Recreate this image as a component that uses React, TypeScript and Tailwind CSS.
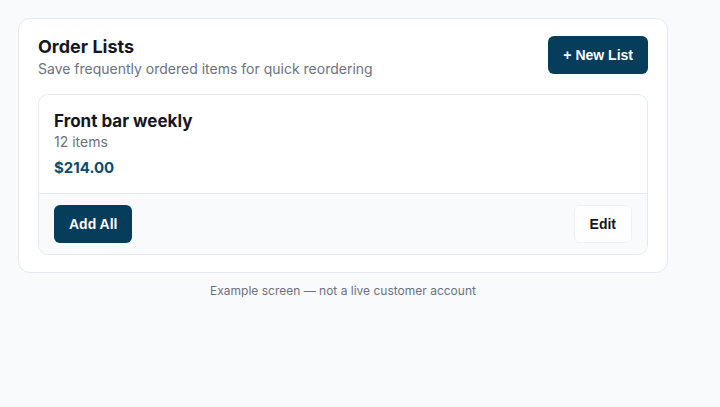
export default function App() {
  return (
    <div className="min-h-screen bg-[#f8fafc] px-[18px] pt-[18px] font-['Inter',sans-serif]">
      <div className="w-[650px]">
        <section className="rounded-[12px] border border-[#e5e9ef] bg-white px-[19px] pb-[17px] pt-[14px]">
          <div className="flex items-start justify-between">
            <div>
              <h1 className="text-[18px] font-bold leading-[28px] text-[#16161f]">Order Lists</h1>
              <p className="mt-[-2px] text-[14px] leading-[20px] text-[#6b7280]">Save frequently ordered items for quick reordering</p>
            </div>
            <button
              type="button"
              className="mt-[3px] h-[38px] rounded-[6px] bg-[#053d5a] px-[15px] font-['Liberation_Sans',Arial,sans-serif] text-[14px] font-bold text-white"
            >
              + New List
            </button>
          </div>
          <article className="mt-[15px] overflow-hidden rounded-[10px] border border-[#e5e9ef]">
            <div className="bg-white px-[15px] pb-[14px] pt-[14px]">
              <p className="text-[17px] font-bold leading-[24px] text-[#16161f]">Front bar weekly</p>
              <p className="mt-[-1px] text-[14px] leading-[20px] text-[#6b7280]">12 items</p>
              <p className="mt-[5px] text-[15px] font-bold leading-[22px] text-[#0c4a6e]">$214.00</p>
            </div>
            <div className="flex items-center justify-between border-t border-[#e5e9ef] bg-[#f8fafc] px-[15px] py-[11px]">
              <button
                type="button"
                className="h-[38px] rounded-[6px] bg-[#053d5a] px-[15px] font-['Liberation_Sans',Arial,sans-serif] text-[14px] font-bold text-white"
              >
                Add All
              </button>
              <button
                type="button"
                className="h-[38px] rounded-[6px] border border-[#eef1f4] bg-white px-[15px] font-['Liberation_Sans',Arial,sans-serif] text-[14px] font-bold text-[#16161f]"
              >
                Edit
              </button>
            </div>
          </article>
        </section>
        <p className="mt-[10px] text-center text-[12px] leading-[16px] text-[#6b7280]">Example screen — not a live customer account</p>
      </div>
    </div>
  );
}
